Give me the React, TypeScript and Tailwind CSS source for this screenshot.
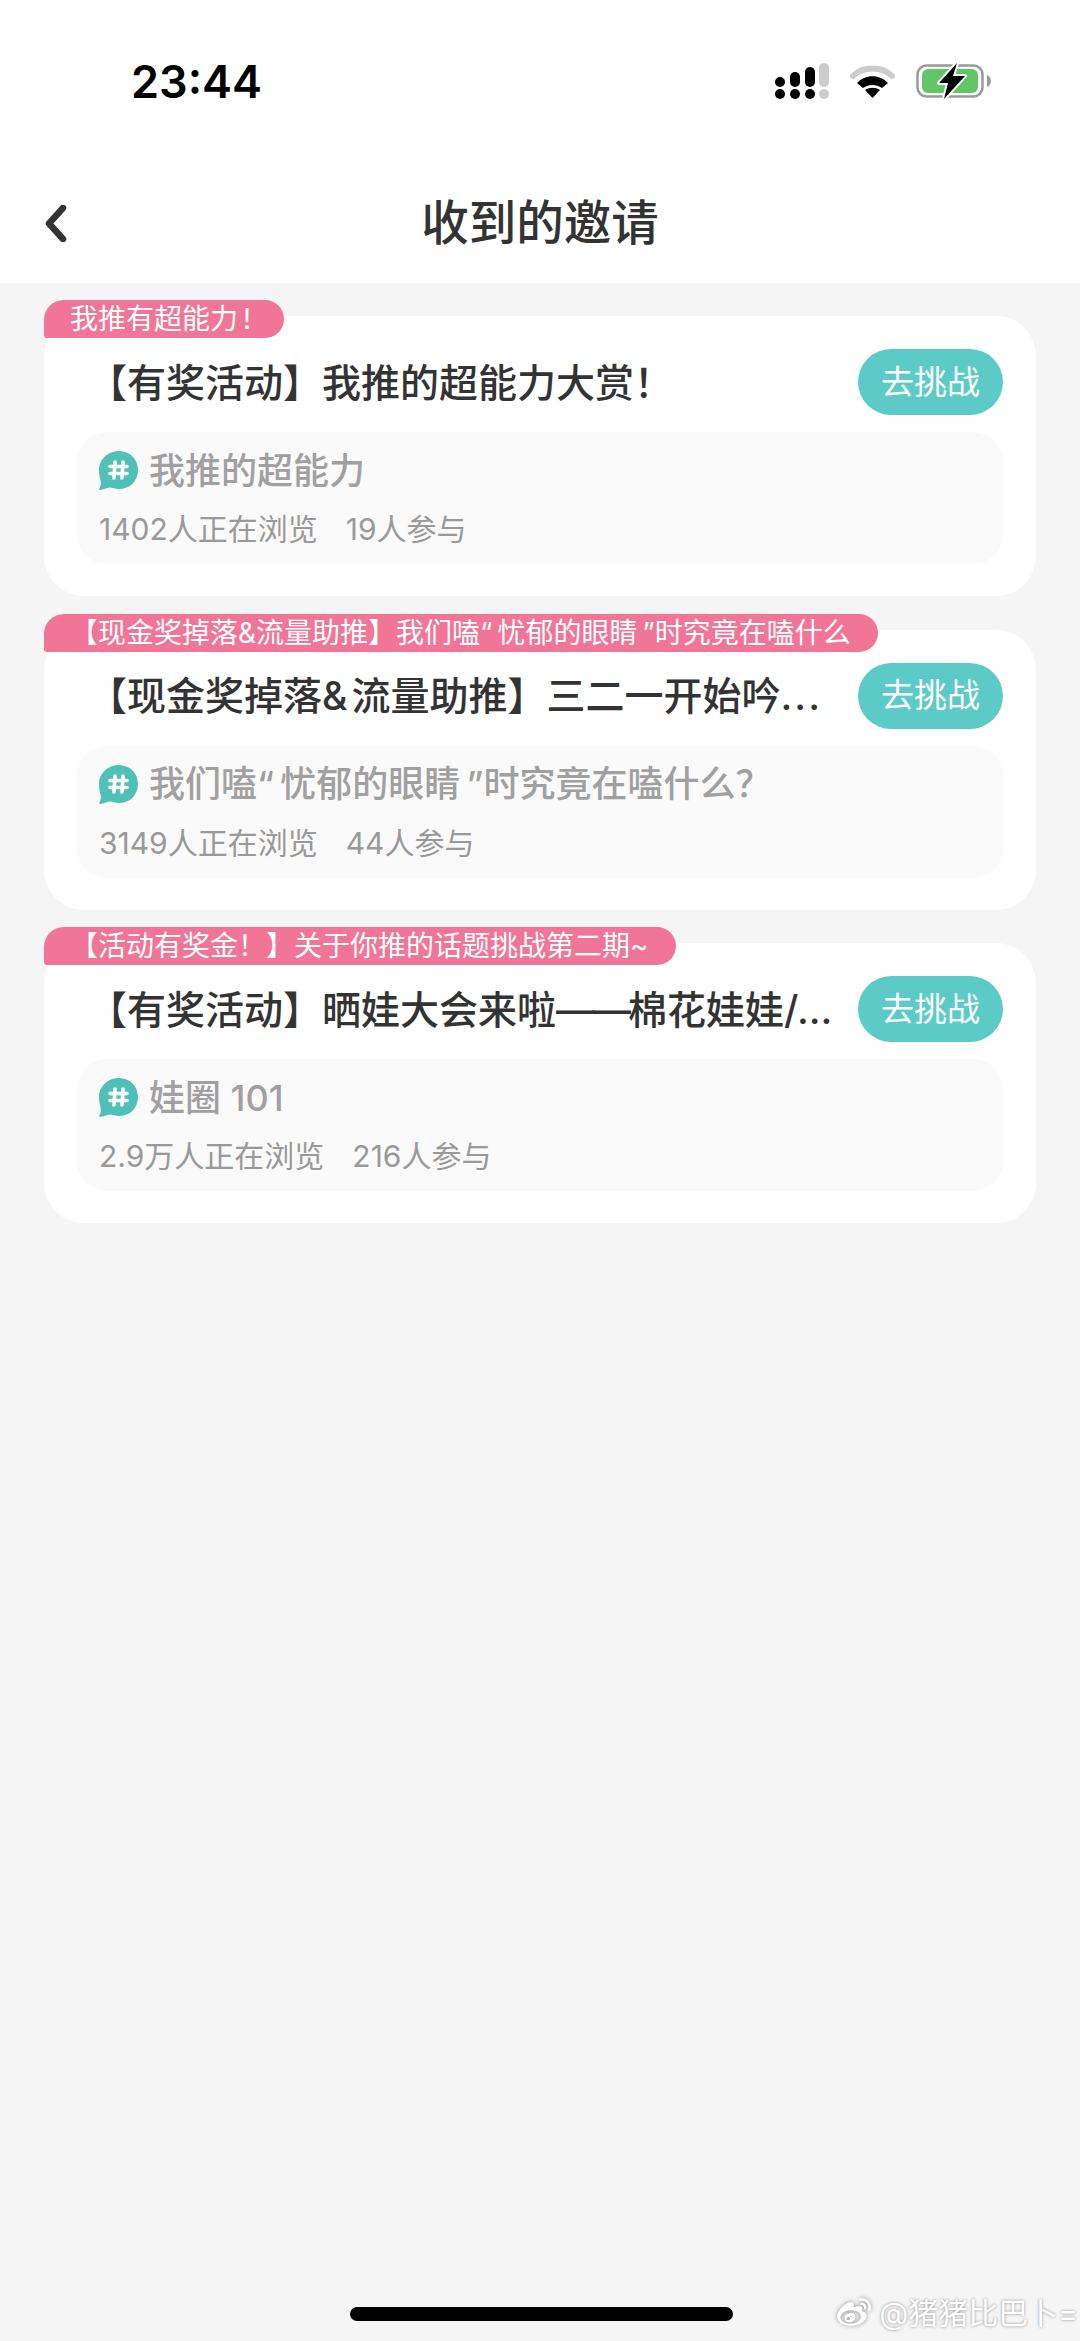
import type { ReactNode } from 'react';
import { FaWeibo } from 'react-icons/fa';

type Invite = {
  tag: string;
  tagPad: string;
  title: ReactNode;
  topic: string;
  viewing: string;
  joined: string;
};

const invites: Invite[] = [
  {
    tag: '我推有超能力\u2009!',
    tagPad: 'pr-[33px]',
    title: '【有奖活动】我推的超能力大赏！',
    topic: '我推的超能力',
    viewing: '1402人正在浏览',
    joined: '19人参与',
  },
  {
    tag: '【现金奖掉落&流量助推】我们嗑“\u2009忧郁的眼睛\u2009”时究竟在嗑什么',
    tagPad: 'pr-[27px]',
    title: (
      <>
        【现金奖掉落<span className="tracking-[4px]">&amp;</span>流量助推】三二一开始吟
        <span className="tracking-[2px]">...</span>
      </>
    ),
    topic: '我们嗑“\u2009忧郁的眼睛\u2009”时究竟在嗑什么？',
    viewing: '3149人正在浏览',
    joined: '44人参与',
  },
  {
    tag: '【活动有奖金！】关于你推的话题挑战第二期~',
    tagPad: 'pr-[27px]',
    title: (
      <>
        【有奖活动】晒娃大会来啦<span className="tracking-[-3px]">——</span>棉花娃娃/...
      </>
    ),
    topic: '娃圈 101',
    viewing: '2.9万人正在浏览',
    joined: '216人参与',
  },
];

function SignalIcon() {
  return (
    <svg width="54" height="36" viewBox="0 0 54 36">
      <rect x="0" y="14" width="10" height="10" rx="5" fill="#000" />
      <rect x="15" y="9" width="10" height="15" rx="5" fill="#000" />
      <rect x="30" y="4" width="10" height="20" rx="5" fill="#000" />
      <rect x="44" y="0" width="10" height="24" rx="5" fill="#ccc" />
      <circle cx="5" cy="31" r="5" fill="#000" />
      <circle cx="20" cy="31" r="5" fill="#000" />
      <circle cx="35" cy="31" r="5" fill="#000" />
      <rect x="44" y="26" width="10" height="10" rx="5" fill="#ccc" />
    </svg>
  );
}

function WifiIcon() {
  return (
    <svg width="45" height="33" viewBox="0 0 45 33">
      <path d="M3 11 C13 1 32 1 42 11" fill="none" stroke="#ccc" strokeWidth="6" strokeLinecap="round" />
      <path d="M7 18 C15 9 30 9 38 18 L32 23 C26 19 19 19 13 23 Z" fill="#000" />
      <path d="M15 25 C20 22 25 22 30 25 L22.5 33 Z" fill="#000" />
    </svg>
  );
}

function BatteryIcon() {
  return (
    <svg width="75" height="36" viewBox="0 0 75 36">
      <rect x="1.5" y="2.500" width="65" height="31" rx="9" fill="none" stroke="#999" strokeWidth="2.500" />
      <rect x="6" y="6" width="56" height="24" rx="6" fill="#63c666" />
      <path d="M71 12 C73.500 13 75 15.500 75 18 C75 20.500 73.500 23 71 24 Z" fill="#999" />
      <path
        d="M41 0 L23 20 L32 20 L28 36 L49 13 L37 13 Z"
        fill="#000"
        stroke="#fff"
        strokeWidth="4"
        strokeLinejoin="round"
        paintOrder="stroke"
      />
    </svg>
  );
}

function TopicIcon() {
  return (
    <svg width="39" height="39" viewBox="0 0 39 39" className="shrink-0">
      <path
        d="M20 0 C31 0 39 8.500 39 19 C39 30 31 38 20 38 C16 38 13 36.500 11 36.500 C8 37 4 38.500 1.500 39 C0 39 0 38 0.500 37 C2 34.500 2 32.500 1.500 29 C0.500 26 0 22.500 0 19 C0 8.500 9 0 20 0 Z"
        fill="#50c1b9"
      />
      <path
        d="M16 11 L15 27 M24 11 L23 27 M11 15.500 L28 15.500 M11 22.500 L28 22.500"
        stroke="#fff"
        strokeWidth="3.600"
        strokeLinecap="round"
      />
    </svg>
  );
}

function InviteCard({ invite }: { invite: Invite }) {
  return (
    <div className="relative h-[280px] rounded-[40px] bg-white pl-[33px] pr-[33px] pt-[33px]">
      <div
        className={`absolute left-0 top-[-16px] flex h-[38px] items-center rounded-tl-[20px] rounded-tr-[19px] rounded-br-[19px] rounded-bl-[3px] bg-[#f17596] pl-[26px] text-[28px] leading-none whitespace-nowrap text-white ${invite.tagPad}`}
      >
        {invite.tag}
      </div>
      <div className="flex h-[66px] items-center justify-between">
        <p className="pl-[11px] text-[39px] font-medium leading-none whitespace-nowrap text-[#333]">
          {invite.title}
        </p>
        <button className="flex h-[66px] w-[145px] shrink-0 items-center justify-center rounded-[33px] bg-[#5ccbc8] text-[33px] leading-none text-white">
          去挑战
        </button>
      </div>
      <div className="mt-[17px] h-[132px] rounded-[30px] bg-[#fafafa] pl-[22px] pt-[19px]">
        <div className="flex h-[39px] items-center gap-[11px]">
          <TopicIcon />
          <span className="text-[36px] font-medium leading-none whitespace-nowrap text-[#a0a0a0]">
            {invite.topic}
          </span>
        </div>
        <div className="mt-[19px] flex gap-[28px] text-[30px] leading-[40px] whitespace-nowrap text-[#999]">
          <span>{invite.viewing}</span>
          <span>{invite.joined}</span>
        </div>
      </div>
    </div>
  );
}

export default function App() {
  return (
    <div className="relative h-[2341px] w-[1080px] overflow-hidden bg-[#f5f5f5] font-['Inter','Noto_Sans_CJK_SC',sans-serif]">
      <header className="h-[283px] bg-white">
        <div className="flex h-[105px] items-center justify-between pl-[131px] pr-[89px] pt-[57px]">
          <span className="text-[45px] font-semibold leading-none text-black">23:44</span>
          <div className="flex items-center gap-[21px]">
            <SignalIcon />
            <WifiIcon />
            <BatteryIcon />
          </div>
        </div>
        <div className="mt-[78px] grid h-[80px] grid-cols-[1fr_auto_1fr] items-center pl-[45px]">
          <svg width="22" height="37" viewBox="0 0 22 37">
            <path
              d="M18 3 L4 18.500 L18 34"
              fill="none"
              stroke="#333"
              strokeWidth="6.500"
              strokeLinecap="round"
              strokeLinejoin="round"
            />
          </svg>
          <h1 className="ml-[-45px] text-[47.5px] font-medium leading-none text-[#333]">收到的邀请</h1>
          <span />
        </div>
      </header>

      <main className="flex flex-col gap-[33.5px] pl-[44px] pr-[44px] pt-[33px]">
        {invites.map((invite) => (
          <InviteCard key={invite.tag} invite={invite} />
        ))}
      </main>

      <div className="absolute bottom-[20px] left-[350px] h-[14px] w-[383px] rounded-full bg-black" />

      <div className="absolute bottom-[11px] right-[2px] flex items-center gap-[6px] text-[30px] leading-none whitespace-nowrap text-white [text-shadow:0_0_3px_#8a8a8a]">
        <FaWeibo className="h-[34px] w-[38px] drop-shadow-[0_0_2px_#8a8a8a]" />
        <span>@猪猪比巴卜=</span>
      </div>
    </div>
  );
}
